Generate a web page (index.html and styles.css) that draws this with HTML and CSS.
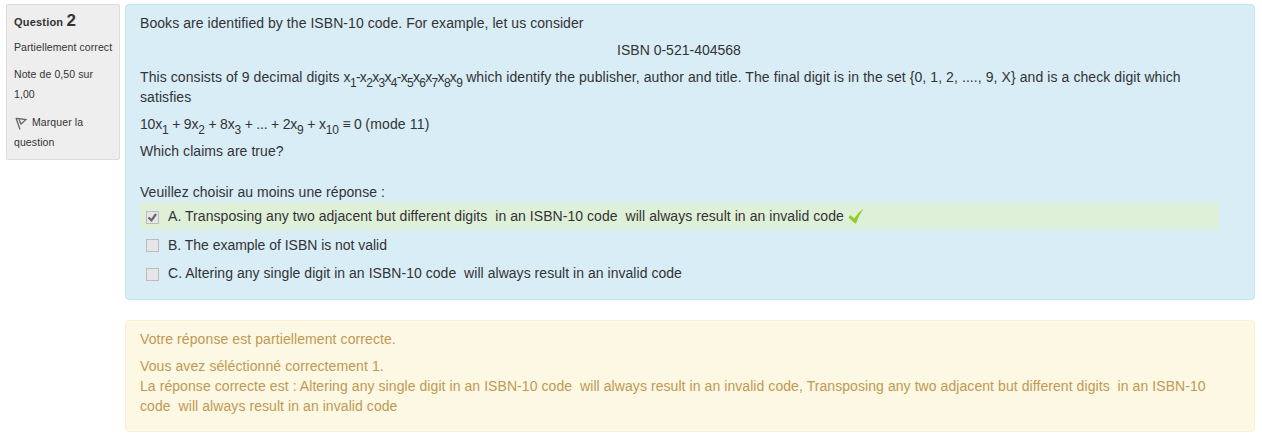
FILE: index.html
```html
<!DOCTYPE html>
<html lang="fr">
<head>
<meta charset="utf-8">
<title>Question 2</title>
<link rel="stylesheet" href="styles.css">
</head>
<body>
<main class="question">
  <aside class="info">
    <h3 class="number">Question <span class="qno">2</span></h3>
    <div class="state">Partiellement correct</div>
    <div class="grade">Note de 0,50 sur 1,00</div>
    <div class="flag"><svg class="flag-icon" width="12" height="13" viewBox="0 0 12 13"><path d="M1 1 5 12.500M1.500 1.300 11 2.500 5.500 7.500M4 2 5.800 7" fill="none" stroke="#666" stroke-width="1.300"/></svg>Marquer la question</div>
  </aside>
  <div class="content">
    <section class="formulation">
      <p>Books are identified by the ISBN-10 code. For example, let us consider</p>
      <p class="center">ISBN 0-521-404568</p>
      <p class="statement">This consists of 9 decimal digits <span class="digits">x<sub>1</sub>-x<sub>2</sub>x<sub>3</sub>x<sub>4</sub>-x<sub>5</sub>x<sub>6</sub>x<sub>7</sub>x<sub>8</sub>x<sub>9</sub></span> which identify the publisher, author and title. The final digit is in the set {0, 1, 2, ...., 9, X} and is a check digit which satisfies</p>
      <p class="equation">10x<sub>1</sub> + 9x<sub>2</sub> + 8x<sub>3</sub> + ... + 2x<sub>9</sub> + x<sub>10</sub> ≡ 0 <span class="modulus">(mode 11)</span></p>
      <p>Which claims are true?</p>
      <div class="prompt">Veuillez choisir au moins une réponse :</div>
      <div class="answer correct"><span class="box"><svg width="11" height="11" viewBox="0 0 11 11"><path d="M1.500 5.500 4.500 8.300 9 2" fill="none" stroke="#666" stroke-width="2.200"/></svg></span><span>A. Transposing any two adjacent but different digits&nbsp; in an ISBN-10 code&nbsp; will always result in an invalid code</span><svg class="tick" width="16" height="16" viewBox="0 0 16 16"><path d="M.5 9.500 2.300 7.200 6.300 10.200Q10 4.500 15.500.5Q11 7 8 15.500L6.500 15Z" fill="#93cb2c"/></svg></div>
      <div class="answer second"><span class="box"></span><span>B. The example of ISBN is not valid</span></div>
      <div class="answer third"><span class="box"></span><span>C. Altering any single digit in an ISBN-10 code&nbsp; will always result in an invalid code</span></div>
    </section>
    <section class="outcome">
      <p>Votre réponse est partiellement correcte.</p>
      <div>Vous avez séléctionné correctement 1.</div>
      <div class="solution">La réponse correcte est : Altering any single digit in an ISBN-10 code&nbsp; will always result in an invalid code, Transposing any two adjacent but different digits&nbsp; in an ISBN-10 code&nbsp; will always result in an invalid code</div>
    </section>
  </div>
</main>
</body>
</html>
```
FILE: styles.css
```css
* { box-sizing: border-box; }
body { margin: 0; background: #fff; color: #333; font: 14px/20px "Liberation Sans", Arial, sans-serif; }
.question { display: flex; align-items: flex-start; gap: 5px; padding: 4px 7px 0 6px; }
.info { width: 114px; height: 156px; padding: 7px 0 5px 7px; background: #eee; border: 1px solid #dcdcdc; border-radius: 2px; font-size: 10.5px; letter-spacing: .09px; }
.number { height: 18px; margin: 0; font-size: 11px; line-height: 20px; letter-spacing: .2px; }
.qno { font-size: 17px; line-height: 18px; }
.state, .grade, .flag { margin-top: 7px; }
.state { white-space: nowrap; }
.grade, .flag { width: 86px; }
.flag { margin-top: 8px; }
.flag-icon { margin: 0 5px 0 1px; vertical-align: -4px; }
.content { flex: 1; }
.formulation { height: 296px; padding: 8px 35px 8px 14px; background: #d9edf7; border: 1px solid #bce8f1; border-radius: 4px; letter-spacing: .055px; }
p { margin: 0 0 7px; }
.center { padding-right: 1px; text-align: center; letter-spacing: 0; }
.statement { letter-spacing: .083px; }
.digits { letter-spacing: -.7px; }
.equation { letter-spacing: -.2px; }
.modulus { letter-spacing: .15px; }
sub { font-size: 12px; line-height: 0; position: relative; bottom: -4.5px; vertical-align: baseline; }
.prompt { margin-top: 21px; }
.answer { display: flex; align-items: center; height: 28px; padding-left: 6px; }
.correct { background: #dff0d8; }
.correct .box, .third .box { margin-top: 2px; }
.second { margin-top: 1px; letter-spacing: -.03px; }
.third { letter-spacing: .04px; }
.box { display: flex; width: 13px; height: 13px; margin-right: 9px; background: #e6e6e6; border: 1px solid #bcbcbc; }
.tick { margin-left: 4px; }
.outcome { height: 112px; margin-top: 20px; padding: 8px 34px 8px 14px; color: #c09853; background: #fcf8e3; border: 1px solid #fbeed5; border-radius: 4px; letter-spacing: .09px; }
.solution { letter-spacing: .07px; }
```
